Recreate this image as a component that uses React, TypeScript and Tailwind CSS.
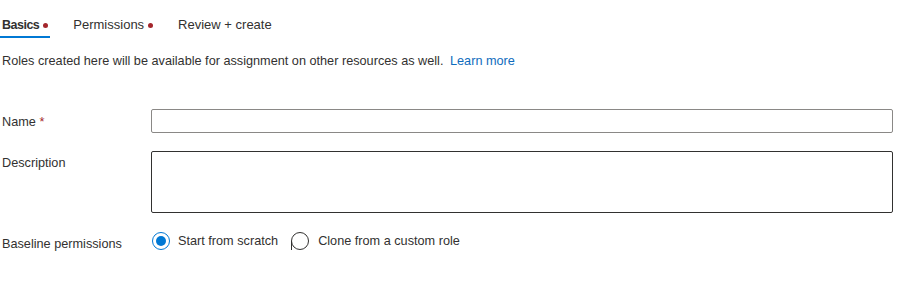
import React from "react";

const tabs = [
  { label: "Basics", error: true, active: true },
  { label: "Permissions", error: true, active: false },
  { label: "Review + create", error: false, active: false },
];

const App: React.FC = () => {
  return (
    <div
      className="w-[906px] h-[288px] bg-white text-[#323130] text-[12.7px]"
      style={{ fontFamily: '"Segoe UI", "Liberation Sans", Arial, sans-serif' }}
    >
      {/* tabs */}
      <div className="flex gap-[21px] pt-[13px]">
        {tabs.map((t) => (
          <div
            key={t.label}
            className={
              t.active
                ? "flex items-center h-[25px] px-[2px] border-b-2 border-[#0078d4] font-semibold"
                : "flex items-center h-[25px] px-[2px] border-b-2 border-transparent"
            }
          >
            <span
              className={
                t.active ? "text-[12.5px] tracking-[-0.5px] leading-[18px]" : "text-[13px] leading-[18px]"
              }
            >
              {t.label}
            </span>
            {t.error && <span className="ml-[4px] mt-[2px] w-[5px] h-[5px] rounded-full bg-[#a4262c]" />}
          </div>
        ))}
      </div>

      <p className="pl-[2px] mt-[14px] leading-[18px]">
        Roles created here will be available for assignment on other resources as well.{" "}
        <a className="ml-[3px] text-[#0f6cbd] cursor-pointer">Learn more</a>
      </p>

      {/* form */}
      <div className="grid grid-cols-[149px_742px] pl-[2px] mt-[39px] gap-y-[18px] items-start">
        <label className="pt-[4px] leading-[18px]">
          Name <span className="text-[#a4262c]">*</span>
        </label>
        <input className="h-[24px] border border-[#8a8886] rounded-[2px] px-2 outline-none" />

        <label className="pt-[3px] leading-[18px]">Description</label>
        <textarea className="h-[62px] border border-[#323130] rounded-[2px] px-2 resize-none outline-none" />

        <label className="pt-[4px] leading-[18px]">Baseline permissions</label>
        <div className="flex items-center">
          <span className="flex items-center justify-center w-[18px] h-[18px] ml-[1px] rounded-full border border-[#0078d4]">
            <span className="w-[10px] h-[10px] rounded-full bg-[#0078d4]" />
          </span>
          <span className="ml-[8px] leading-[18px]">Start from scratch</span>
          <svg width="20" height="20" viewBox="0 0 20 20" className="ml-[12px]">
            <circle cx="10" cy="10" r="8.5" fill="none" stroke="#323130" strokeWidth="1" />
            <line x1="1.5" y1="10" x2="1.5" y2="19" stroke="#323130" strokeWidth="1" />
          </svg>
          <span className="ml-[8px] leading-[18px]">Clone from a custom role</span>
        </div>
      </div>
    </div>
  );
};

export default App;
